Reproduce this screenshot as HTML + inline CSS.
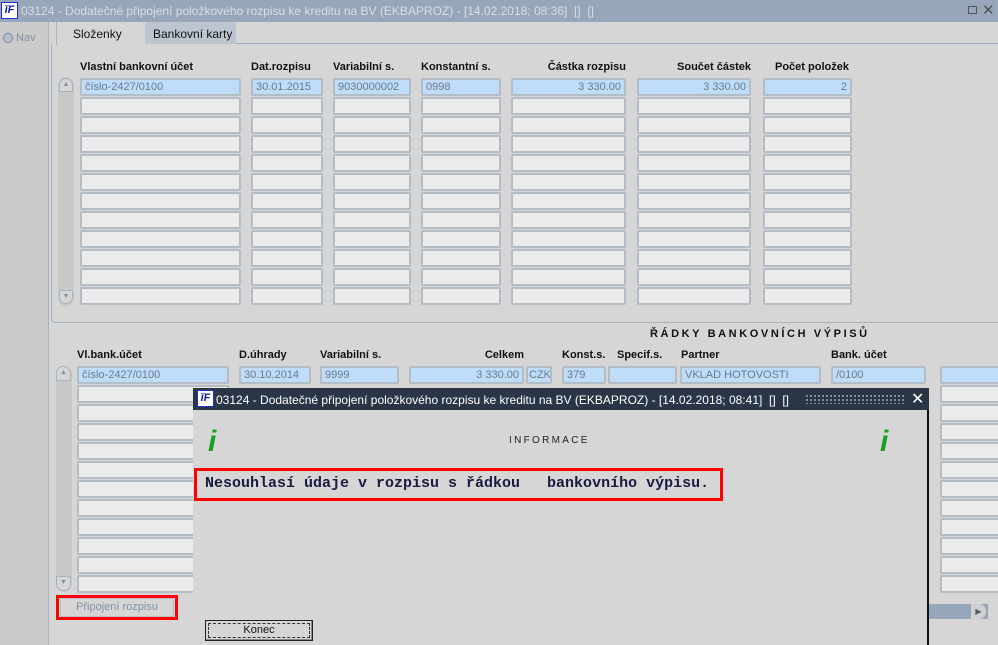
<!DOCTYPE html>
<html><head><meta charset="utf-8"><style>
*{box-sizing:border-box;margin:0;padding:0}
body{width:998px;height:645px;overflow:hidden;background:#d6d6d6;font-family:"Liberation Sans",Arial,sans-serif;font-size:11px;position:relative}
.a{position:absolute}
.f{position:absolute;height:18px;background:#ebebeb;border:2px solid #b4bcc6;border-radius:2px;font-size:11px;color:#6a7a90;line-height:14px;padding:0 3px;white-space:nowrap;overflow:hidden}
.f.s{background:#bfdcf8}
.r{text-align:right}
.h{position:absolute;font-weight:bold;font-size:11px;color:#111;white-space:nowrap}
.logo{position:absolute;width:17px;height:17px;background:#fff;border:1px solid #2030d0;color:#1020b0;font:italic bold 11px "Liberation Sans",sans-serif;text-align:center;line-height:15px}
</style></head><body>
<div class="a" style="left:0;top:0;width:998px;height:22px;background:#97a6b9"></div>
<div class="logo" style="left:1px;top:2px">ĭF</div>
<div class="a" style="left:21px;top:4px;font-size:12px;color:#d9dee6;white-space:nowrap">03124 - Dodatečné připojení položkového rozpisu ke kreditu na BV (EKBAPROZ) - [14.02.2018; 08:36] &nbsp;[] &nbsp;[]</div>
<div class="a" style="left:968px;top:6px;width:9px;height:8px;border:1px solid #555"></div>
<div class="a" style="left:982px;top:1px;font-size:15px;color:#555">✕</div>
<div class="a" style="left:0;top:22px;width:49px;height:623px;background:#cbcbcb;border-right:1px solid #a8b3c1"></div>
<div class="a" style="left:3px;top:33px;width:10px;height:10px;border-radius:50%;border:1px solid #7a8698;background:#b8c0cc"></div>
<div class="a" style="left:16px;top:32px;color:#8090a4;font-size:11px">Nav</div>
<div class="a" style="left:56px;top:22px;width:89px;height:23px;background:#d6d6d6;border-left:1px solid #aab4c0"></div>
<div class="a" style="left:73px;top:27px;font-size:12px;color:#111">Složenky</div>
<div class="a" style="left:145px;top:22px;width:91px;height:22px;background:#bcc5d0;border-radius:3px 3px 0 0"></div>
<div class="a" style="left:153px;top:27px;font-size:12px;color:#111">Bankovní karty</div>
<div class="a" style="left:236px;top:43px;width:762px;height:1px;background:#98a8bb"></div>
<div class="a" style="left:51px;top:44px;width:948px;height:279px;border:1px solid #a8b3c1;border-top:none;border-radius:0 0 0 4px"></div>
<div class="a" style="left:58px;top:77px;width:16px;height:229px;background:#c8c8c8;border-radius:8px"></div>
<div class="a" style="left:59px;top:78px;width:14px;height:14px;border:1px solid #a8b3c1;border-radius:7px 7px 0 0;background:#d6d6d6;color:#8090a4;font-size:7px;text-align:center;line-height:12px">▲</div>
<div class="a" style="left:59px;top:290px;width:14px;height:14px;border:1px solid #a8b3c1;border-radius:0 0 7px 7px;background:#d6d6d6;color:#8090a4;font-size:7px;text-align:center;line-height:12px">▼</div>
<div class="h" style="left:80px;top:61px">Vlastní bankovní účet</div>
<div class="h" style="left:251px;top:61px">Dat.rozpisu</div>
<div class="h" style="left:333px;top:61px">Variabilní s.</div>
<div class="h" style="left:421px;top:61px">Konstantní s.</div>
<div class="h" style="left:511px;top:61px;width:115px;text-align:right">Částka rozpisu</div>
<div class="h" style="left:637px;top:61px;width:114px;text-align:right">Součet částek</div>
<div class="h" style="left:775px;top:61px">Počet položek</div>
<div id="up"></div>
<div class="a" style="left:650px;top:328px;font-weight:bold;font-size:11px;letter-spacing:2.6px;color:#111">ŘÁDKY BANKOVNÍCH VÝPISŮ</div>
<div class="h" style="left:77px;top:349px">Vl.bank.účet</div>
<div class="h" style="left:239px;top:349px">D.úhrady</div>
<div class="h" style="left:320px;top:349px">Variabilní s.</div>
<div class="h" style="left:409px;top:349px;width:115px;text-align:right">Celkem</div>
<div class="h" style="left:562px;top:349px">Konst.s.</div>
<div class="h" style="left:617px;top:349px">Specif.s.</div>
<div class="h" style="left:681px;top:349px">Partner</div>
<div class="h" style="left:831px;top:349px">Bank. účet</div>
<div class="a" style="left:56px;top:366px;width:16px;height:226px;background:#c8c8c8;border-radius:8px"></div>
<div class="a" style="left:56px;top:366px;width:15px;height:15px;border:1px solid #a8b3c1;border-radius:7px 7px 0 0;background:#d6d6d6;color:#8090a4;font-size:7px;text-align:center;line-height:12px">▲</div>
<div class="a" style="left:56px;top:576px;width:15px;height:15px;border:1px solid #a8b3c1;border-radius:0 0 7px 7px;background:#d6d6d6;color:#8090a4;font-size:7px;text-align:center;line-height:12px">▼</div>
<div id="lo"></div>
<div class="a" style="left:928px;top:604px;width:60px;height:15px;background:#97a6b9"></div>
<div class="a" style="left:971px;top:604px;width:15px;height:15px;background:#d0d0d0;border-radius:0 7px 7px 0;color:#556;font-size:8px;line-height:15px;text-align:center">▶</div>
<div class="a" style="left:56px;top:595px;width:122px;height:25px;border:3px solid #f00"></div>
<div class="a" style="left:60px;top:598px;width:114px;height:19px;border:1px solid #b4bcc6;background:#d6d6d6;color:#8090a4;font-size:11px;text-align:center;line-height:17px">Připojení rozpisu</div>
<div class="a" style="left:193px;top:388px;width:736px;height:257px;background:#d6d6d6;border-right:2px solid #111"></div>
<div class="a" style="left:193px;top:388px;width:736px;height:22px;background:#2a3546"></div>
<div class="logo" style="left:197px;top:390px">ĭF</div>
<div class="a" style="left:216px;top:393px;font-size:12px;color:#fff;white-space:nowrap">03124 - Dodatečné připojení položkového rozpisu ke kreditu na BV (EKBAPROZ) - [14.02.2018; 08:41] &nbsp;[] &nbsp;[]</div>
<div class="a" style="left:805px;top:394px;width:100px;height:10px;background-image:radial-gradient(#8894a6 1px,transparent 1.2px);background-size:4px 4px"></div>
<div class="a" style="left:911px;top:389px;font-size:16px;color:#fff">✕</div>
<div class="a" style="left:208px;top:425px;font:italic bold 30px 'Liberation Sans',sans-serif;color:#1aa020">i</div>
<div class="a" style="left:880px;top:425px;font:italic bold 30px 'Liberation Sans',sans-serif;color:#1aa020">i</div>
<div class="a" style="left:509px;top:435px;font-size:10px;letter-spacing:2.3px;color:#222">INFORMACE</div>
<div class="a" style="left:194px;top:468px;width:529px;height:33px;border:3px solid #f00"></div>
<div class="a" style="left:205px;top:475px;font:bold 15px 'Liberation Mono',monospace;color:#1a1a40;white-space:pre">Nesouhlasí údaje v rozpisu s řádkou   bankovního výpisu.</div>
<div class="a" style="left:205px;top:620px;width:108px;height:21px;border:1px solid #222;background:#d6d6d6;box-shadow:inset -1px -1px #888"></div>
<div class="a" style="left:208px;top:623px;width:102px;height:15px;border:1px dashed #333;text-align:center;font-size:11px;line-height:13px;color:#111">Konec</div>
<script>
var up=document.getElementById('up'),h='';
var uc=[[80,161,'číslo-2427/0100',0],[251,72,'30.01.2015',0],[333,78,'9030000002',0],[421,80,'0998',0],[511,115,'3 330.00',1],[637,114,'3 330.00',1],[763,89,'2',1]];
for(var i=0;i<12;i++){uc.forEach(function(c){h+='<div class="f'+(i==0?' s':'')+(c[3]?' r':'')+'" style="left:'+c[0]+'px;top:'+(78+i*19)+'px;width:'+c[1]+'px">'+(i==0?c[2]:'')+'</div>'})}
up.innerHTML=h;h='';
var lc=[[77,152,'číslo-2427/0100',0],[239,72,'30.10.2014',0],[320,79,'9999',0],[409,115,'3 330.00',1],[526,26,'CZK',0],[562,44,'379',0],[608,69,'',0],[680,141,'VKLAD HOTOVOSTI',0],[831,95,'/0100',0],[940,70,'',0]];
for(var i=0;i<12;i++){lc.forEach(function(c,k){if(i>0&&k>0&&k<9)return;h+='<div class="f'+(i==0?' s':'')+(c[3]?' r':'')+'" style="left:'+c[0]+'px;top:'+(366+i*19)+'px;width:'+c[1]+'px;'+(k==4?'padding:0 1px':'')+'">'+(i==0?c[2]:'')+'</div>'})}
document.getElementById('lo').innerHTML=h;
</script>
</body></html>
